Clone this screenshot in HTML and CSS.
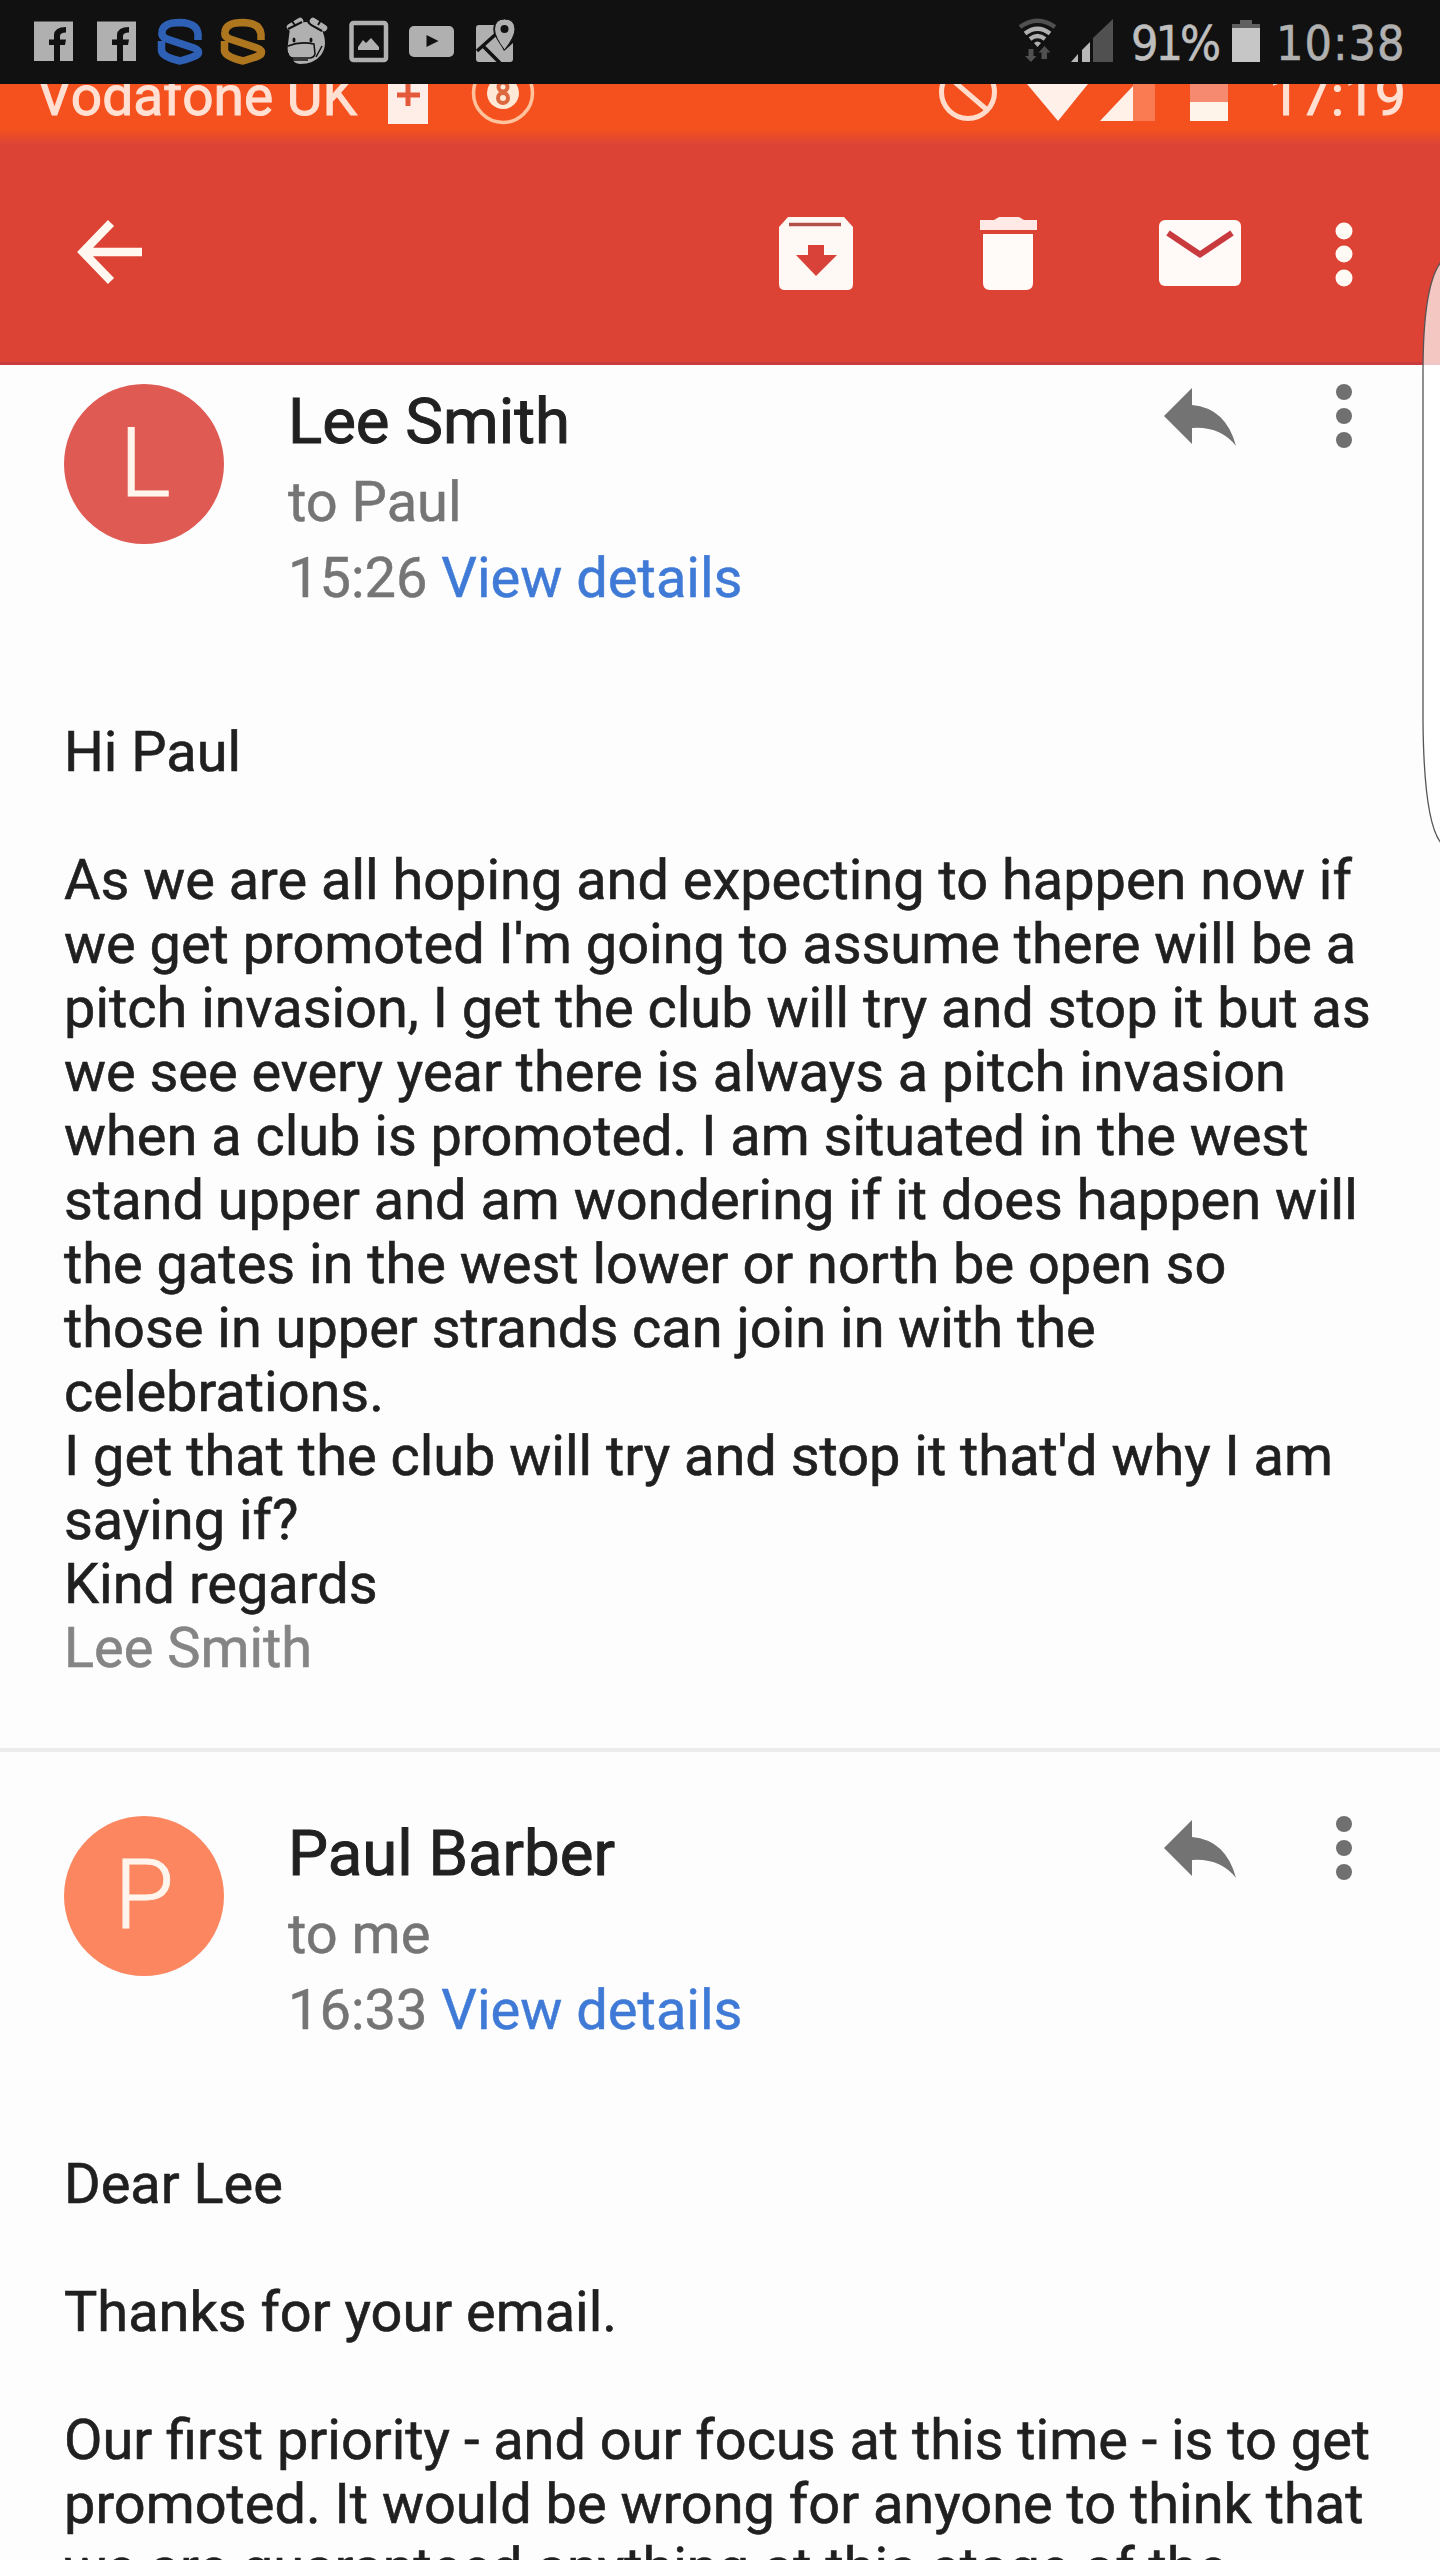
FILE: index.html
```
<!DOCTYPE html>
<html lang="en">

<head>
    <meta charset="UTF-8">
    <meta name="viewport" content="width=device-width, initial-scale=1.0">
    <title>Mail</title>
    <link rel="stylesheet" href="styles.css">
</head>

<body>
    <div class="screen">
        <div class="status-bar">
            <svg class="notifications" width="560" height="84" viewBox="0 0 560 84" aria-hidden="true">
                <!-- facebook -->
                <g id="fb">
                    <rect x="34" y="21.5" width="39" height="39.5" fill="#b0b0b0" />
                    <path d="M54 61V45H49V39.500H54V35Q54.500 27 66 27V32.500Q60 32.500 60 36V39.500H66L65 45H60V61Z" fill="#111" />
                </g>
                <use href="#fb" x="63" />
                <!-- shields -->
                <path id="shield" d="M198 40V34Q197 23 180 22.500Q163 22.500 162 32Q161 37 167 39L194 48Q200 50 198 54Q195 57 180 61Q163 57 161.500 51V41" fill="none" stroke="currentColor" stroke-width="7.500" stroke-linejoin="round" />
                <use class="gold" href="#shield" x="63" />
                <!-- cow -->
                <path d="M290 28Q306 16 321 28Q329 44 321 55Q314 64 300 64Q292 63 293 58Q286 56 288 44Z" fill="#b0b0b0" />
                <path d="M290 27L300 21M324 28L313 21" stroke="#b0b0b0" stroke-width="6.500" stroke-linecap="round" />
                <path d="M288 29L292 27L302 22M308 22L311 25L322 31M291 20L295 25M321 20L318 25" fill="none" stroke="#111" stroke-width="2" />
                <path d="M288 46Q300 41 314 44L315 54Q314 58 309 58H292Q288 57 288 53M293 60H308M316 57L322 46" fill="none" stroke="#111" stroke-width="1.500" />
                <ellipse cx="294" cy="40" rx="1.500" ry="2.500" fill="#111" />
                <ellipse cx="311" cy="40" rx="1.500" ry="2.500" fill="#111" />
                <!-- picture -->
                <rect x="351.500" y="23" width="34.500" height="37" rx="2" fill="none" stroke="#b0b0b0" stroke-width="4.500" />
                <path d="M358 50V47L363 40L366 43L371 38L379 47V50Z" fill="#b0b0b0" />
                <!-- video -->
                <rect x="409" y="26" width="45" height="31" rx="5" fill="#b0b0b0" />
                <path d="M426.500 35L438.500 41L426.500 47Z" fill="#111" />
                <!-- map -->
                <path d="M479 25H494Q491 33 500 43L504 51L513 43V59Q513 62 510 62H479Q476 62 476 59V28Q476 25 479 25Z" fill="#b0b0b0" />
                <path d="M477 51L496 34M483 46L500 63" stroke="#111" stroke-width="3.500" />
                <path d="M504.500 50Q494.500 37 494.500 29Q495 19 504.500 19Q514.500 19 515 29Q515 37 504.500 50Z" fill="#b0b0b0" stroke="#111" stroke-width="1" />
                <circle cx="504.500" cy="29" r="4" fill="#111" />
            </svg>
            <div class="status-right">
                <svg width="110" height="84" viewBox="1015 0 110 84" aria-hidden="true">
                    <path d="M1020 27Q1037.500 14.500 1055 27" fill="none" stroke="#505050" stroke-width="4.500" />
                    <path d="M1025 33.500Q1037.500 24 1050 33.500M1030 39Q1037.500 33 1045 39" fill="none" stroke="#b0b0b0" stroke-width="4.200" />
                    <path d="M1034 43Q1037.500 40 1041 43L1037.500 47Z" fill="#b0b0b0" />
                    <path d="M1028.500 49H1033.500V56H1036.500L1031 62L1025 56H1028.500ZM1041.500 59H1047V52.500H1050.500L1044.500 46L1038.500 52.500H1041.500Z" fill="#505050" />
                    <path d="M1071 62L1078 54V62ZM1082 62V50L1090 42V62Z" fill="#b8b8b8" />
                    <path d="M1093 62V38L1113 19V62Z" fill="#505050" />
                </svg>
                <span class="battery-level">91%</span>
                <svg width="28" height="84" viewBox="1232 0 28 84" aria-hidden="true">
                    <path d="M1240 20H1252V24H1260V28H1232V24H1240Z" fill="#606060" />
                    <rect x="1232" y="28" width="28" height="34" fill="#c6c6c6" />
                </svg>
                <span class="clock">10:38</span>
            </div>
        </div>

        <div class="old-status">
            <div class="carrier">Vodafone UK</div>
            <svg width="160" height="60" viewBox="380 84 160 60" aria-hidden="true">
                <path d="M388 84H428V124H388Z" fill="#ffeee8" />
                <path d="M397 95H420M408 84V106" stroke="#e35a3a" stroke-width="5" />
                <circle cx="503" cy="93" r="29.500" fill="none" stroke="#ffc29c" stroke-width="3.500" />
                <circle cx="503" cy="93" r="16" fill="#ffe9d6" />
                <circle cx="503" cy="87" r="4.500" fill="none" stroke="#dd6840" stroke-width="4" />
                <circle cx="503" cy="98" r="5" fill="none" stroke="#dd6840" stroke-width="4" />
            </svg>
            <svg class="old-signals" width="310" height="60" viewBox="930 84 310 60" aria-hidden="true">
                <circle cx="968" cy="92" r="26.500" fill="none" stroke="#ffdccb" stroke-width="5" />
                <path d="M950 78L986 109" stroke="#ffdccb" stroke-width="5" />
                <path d="M1027 84H1088L1058 121Z" fill="#fff0ea" />
                <path d="M1133 84H1155V121H1133Z" fill="#fa7a52" />
                <path d="M1100 121L1133 86V121Z" fill="#fff0e8" />
                <rect x="1190" y="84" width="38" height="18" fill="#f58a70" />
                <rect x="1190" y="102" width="38" height="19" fill="#fff4ea" />
            </svg>
            <div class="old-clock">17:19</div>
        </div>

        <div class="toolbar">
            <svg width="70" height="80" viewBox="76 214 70 80" aria-label="Back">
                <path d="M142 252H84M111 223L83 252L111 281" fill="none" stroke="#fff7f0" stroke-width="8.500" />
            </svg>
            <svg class="archive" width="76" height="80" viewBox="778 214 76 80" aria-label="Archive">
                <path d="M788 217H844L853 227V284Q853 290 847 290H785Q779 290 779 284V227Z" fill="#fff9f6" />
                <path d="M789 224.500H841" stroke="#b35048" stroke-width="3.500" />
                <path d="M808 245H824V255H837L816 276L796 255H808Z" fill="#d84238" />
            </svg>
            <svg class="trash" width="60" height="80" viewBox="978 214 60 80" aria-label="Delete">
                <path d="M980 220H994L999 217H1019L1024 220H1037V230H980Z" fill="#ffe9e6" />
                <path d="M983 234H1033V283Q1033 290 1026 290H990Q983 290 983 283Z" fill="#fffbf8" />
            </svg>
            <svg class="envelope" width="84" height="80" viewBox="1158 214 84 80" aria-label="Mark unread">
                <rect x="1159" y="220" width="82" height="66" rx="6" fill="#fff9f8" />
                <path d="M1168 233L1200 254.500L1232 233" fill="none" stroke="#c83a3d" stroke-width="6" />
            </svg>
            <svg class="more" width="20" height="80" viewBox="1334 214 20 80" aria-label="More">
                <circle cx="1344" cy="231" r="8.500" fill="#fffaf4" />
                <circle cx="1344" cy="254" r="8.500" fill="#fffaf4" />
                <circle cx="1344" cy="278" r="8.500" fill="#fffaf4" />
            </svg>
        </div>

        <article class="message">
            <header class="message-head">
                <div class="avatar avatar-l">L</div>
                <div class="sender">
                    <div class="name">Lee Smith</div>
                    <div class="to">to Paul</div>
                    <div class="time">15:26 <a class="details">View details</a></div>
                </div>
                <svg class="actions" width="192" height="70" viewBox="1162 384 192 70" aria-hidden="true">
                    <g id="actions">
                        <path d="M1164 416L1192 388V405Q1226 408 1236 446Q1220 426 1192 428V444Z" fill="#737373" />
                        <circle cx="1344" cy="392" r="8" fill="#707070" />
                        <circle cx="1344" cy="416" r="8" fill="#707070" />
                        <circle cx="1344" cy="440" r="8" fill="#707070" />
                    </g>
                </svg>
            </header>
            <div class="body">
                <p>Hi Paul</p>
                <p>As we are all hoping and expecting to happen now if<br>
                    we get promoted I'm going to assume there will be a<br>
                    pitch invasion, I get the club will try and stop it but as<br>
                    we see every year there is always a pitch invasion<br>
                    when a club is promoted. I am situated in the west<br>
                    stand upper and am wondering if it does happen will<br>
                    the gates in the west lower or north be open so<br>
                    those in upper strands can join in with the<br>
                    celebrations.<br>
                    I get that the club will try and stop it that'd why I am<br>
                    saying if?<br>
                    Kind regards<br>
                    <span class="signature">Lee Smith</span></p>
            </div>
        </article>

        <article class="message">
            <header class="message-head">
                <div class="avatar avatar-p">P</div>
                <div class="sender">
                    <div class="name">Paul Barber</div>
                    <div class="to">to me</div>
                    <div class="time">16:33 <a class="details">View details</a></div>
                </div>
                <svg class="actions" width="192" height="70" viewBox="1162 384 192 70" aria-hidden="true">
                    <use href="#actions" />
                </svg>
            </header>
            <div class="body">
                <p>Dear Lee</p>
                <p>Thanks for your email.</p>
                <p>Our first priority - and our focus at this time - is to get<br>
                    promoted. It would be wrong for anyone to think that<br>
                    we are guaranteed anything at this stage of the</p>
            </div>
        </article>

        <!-- edge panel handle -->
        <svg class="edge-panel" width="20" height="600" viewBox="0 0 20 600" aria-hidden="true">
            <path d="M21 10Q3 33 3 120V470Q4 570 21 591" fill="#fff" fill-opacity=".7" stroke="#555" stroke-width="1.300" />
        </svg>
    </div>
</body>

</html>
```
FILE: styles.css
```
body {
    margin: 0;
    background: #fdfdfd;
    font-family: Roboto, sans-serif;
}

.screen {
    position: relative;
    width: 1440px;
    height: 2560px;
    overflow: hidden;
    display: flex;
    flex-direction: column;
}

.status-bar {
    flex: none;
    height: 84px;
    display: flex;
    justify-content: space-between;
    background: #111;
}

.notifications {
    color: #2e60b5;
}

#shield {
    color: inherit;
}

.gold {
    color: #ae761e;
}

.status-right {
    display: flex;
    width: 425px;
    font-family: "DejaVu Sans Condensed", "DejaVu Sans", sans-serif;
    font-stretch: condensed;
    font-size: 48px;
    line-height: 86px;
    color: #bebebe;
    -webkit-text-stroke: 0.6px;
}

.battery-level {
    width: 101px;
    margin-left: 6px;
    letter-spacing: -3px;
    white-space: nowrap;
}

.clock {
    margin-left: 16px;
    letter-spacing: 1px;
    color: #b0b0b0;
}

.old-status {
    flex: none;
    height: 60px;
    display: flex;
    overflow: hidden;
    background: linear-gradient(#f4511e 45px, #dd4535);
    color: #ffe0d2;
    font-size: 55px;
    line-height: 24px;
    white-space: nowrap;
    -webkit-text-stroke: 1px;
}

.carrier {
    width: 343px;
    margin-left: 37px;
}

.old-signals {
    margin-left: 390px;
}

.old-clock {
    margin-left: 29px;
}

.toolbar {
    flex: none;
    box-sizing: border-box;
    height: 221px;
    padding: 70px 86px 0 76px;
    display: flex;
    background: #dc4335;
    border-bottom: 3px solid #c83c40;
}

.archive {
    margin-left: 632px;
}

.trash {
    margin-left: 124px;
}

.envelope {
    margin-left: 120px;
}

.more {
    margin-left: 92px;
}

.message {
    flex: none;
    box-sizing: border-box;
    height: 1387px;
    padding: 19px 64px 0;
    border-bottom: 4px solid #ececec;
}

.message + .message {
    padding-top: 64px;
}

.message-head {
    display: flex;
    height: 336px;
}

.avatar {
    flex: none;
    box-sizing: border-box;
    width: 160px;
    height: 160px;
    padding-left: 2px;
    border-radius: 50%;
    color: #fff5ec;
    font-size: 97px;
    font-weight: 300;
    line-height: 159px;
    text-align: center;
    -webkit-text-stroke: 1px;
}

.avatar-l {
    background: #df5a52;
}

.avatar-p {
    padding-left: 0;
    background: #fb8660;
}

.sender {
    width: 600px;
    margin-left: 64px;
    color: #757575;
    font-size: 56px;
    white-space: nowrap;
    -webkit-text-stroke: 0.5px;
}

.name {
    height: 80px;
    line-height: 76px;
    font-size: 63.500px;
    color: #212121;
    -webkit-text-stroke: 1px;
}

.to {
    height: 76px;
    line-height: 76px;
}

.time {
    line-height: 76px;
}

.details {
    color: #3f7ad6;
}

.actions {
    margin-left: 274px;
}

.body {
    color: #202020;
    font-size: 55.900px;
    line-height: 64px;
    white-space: nowrap;
    -webkit-text-stroke: 0.6px;
}

.body p {
    margin: 0 0 64px;
}

.signature {
    color: #858585;
}

.edge-panel {
    position: absolute;
    top: 252px;
    right: 0;
}
```
